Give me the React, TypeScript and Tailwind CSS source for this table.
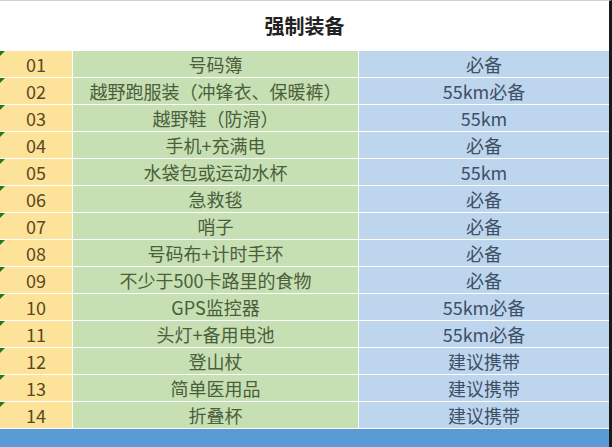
const rows = [
  ["01", "号码簿", "必备"],
  ["02", "越野跑服装（冲锋衣、保暖裤）", "55km必备"],
  ["03", "越野鞋（防滑）", "55km"],
  ["04", "手机+充满电", "必备"],
  ["05", "水袋包或运动水杯", "55km"],
  ["06", "急救毯", "必备"],
  ["07", "哨子", "必备"],
  ["08", "号码布+计时手环", "必备"],
  ["09", "不少于500卡路里的食物", "必备"],
  ["10", "GPS监控器", "55km必备"],
  ["11", "头灯+备用电池", "55km必备"],
  ["12", "登山杖", "建议携带"],
  ["13", "简单医用品", "建议携带"],
  ["14", "折叠杯", "建议携带"],
];

export default function App() {
  return (
    <div
      className="w-[612px] h-[447px] bg-white overflow-hidden border-r-[3px] border-r-[#1a1a1a] border-t border-t-[#cfcfcf]"
      style={{ fontFamily: '"Noto Sans CJK SC", "Noto Sans", sans-serif' }}
    >
      <div className="h-[50px] flex items-center justify-center text-[20px] font-bold text-[#222]">
        强制装备
      </div>
      <div className="grid grid-cols-[72px_285px_250px] gap-px bg-white">
        {rows.map(([no, item, need]) => (
          <div key={no} className="contents">
            <div className="relative h-[26px] bg-[#fde29a] flex items-center justify-center text-[18px] text-[#5c4822]">
              <span className="absolute left-0 top-0 w-0 h-0 border-t-[5px] border-r-[5px] border-t-[#1e7b22] border-r-transparent" />
              {no}
            </div>
            <div className="h-[26px] bg-[#c6dfb3] flex items-center justify-center text-[18px] text-[#4b5e3c] whitespace-nowrap">
              {item}
            </div>
            <div className="h-[26px] bg-[#bdd5ed] flex items-center justify-center text-[18px] text-[#3e5065]">
              {need}
            </div>
          </div>
        ))}
      </div>
      <div className="mt-px h-[18px] bg-[#5b9bd5]" />
    </div>
  );
}
